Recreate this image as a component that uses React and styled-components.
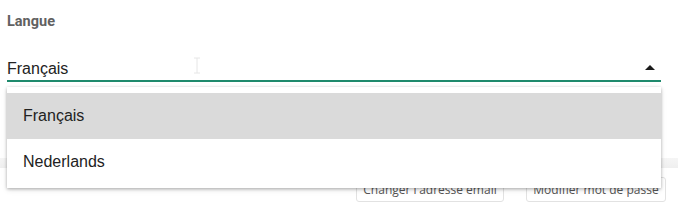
import React, { useState } from "react";
import styled, { createGlobalStyle } from "styled-components";

const GlobalStyle = createGlobalStyle`
  html, body {
    margin: 0;
    padding: 0;
    background: #fff;
  }
  body {
    font-family: "Liberation Sans", Arial, sans-serif;
  }
`;

const Page = styled.div`
  width: 678px;
  height: 209px;
  overflow: hidden;
  display: flex;
  flex-direction: column;
`;

const Field = styled.div`
  display: flex;
  flex-direction: column;
  padding: 0 17px 0 7px;
  position: relative;
  z-index: 2;
`;

const Label = styled.div`
  margin-top: 13px;
  font-family: Roboto, "Liberation Sans", sans-serif;
  font-weight: 700;
  font-size: 14.5px;
  line-height: 17px;
  color: #616161;
`;

const SelectBox = styled.div`
  position: relative;
  margin-top: 29px;
  display: flex;
  align-items: center;
  justify-content: space-between;
  padding-bottom: 2px;
  border-bottom: 2px solid #1f8a6d;
  cursor: pointer;
`;

const Value = styled.span`
  font-size: 16px;
  line-height: 19px;
  color: #222;
`;

const Arrow = styled.span`
  width: 0;
  height: 0;
  margin: 0 6px 3px 0;
  border-left: 5px solid transparent;
  border-right: 5px solid transparent;
  border-bottom: 5px solid #1a1a1a;
`;

const Caret = styled.svg`
  position: absolute;
  left: 186px;
  top: -2px;
`;

const Menu = styled.ul`
  position: absolute;
  top: calc(100% + 7px);
  left: 0;
  right: 0;
  margin: 0;
  padding: 6px 0 3px;
  list-style: none;
  background: #fff;
  box-shadow: 0 1px 3px rgba(0, 0, 0, 0.28), 0 2px 6px rgba(0, 0, 0, 0.1);
`;

const Item = styled.li`
  height: 46px;
  display: flex;
  align-items: center;
  padding-left: 16px;
  font-size: 16px;
  color: #222;
  background: ${(p) => (p.$active ? "#dadada" : "#fff")};
`;

const Band = styled.div`
  margin-top: 76px;
  height: 10px;
  background: linear-gradient(#f5f5f5, #efefef);
`;

const Actions = styled.div`
  display: flex;
  justify-content: flex-end;
  gap: 22px;
  margin-top: 9px;
  padding-right: 12px;
`;

const Button = styled.button`
  height: 25px;
  width: ${(p) => p.$w}px;
  padding: 0;
  background: #fff;
  border: 1px solid #e2e2e2;
  border-radius: 3px;
  font-family: "Open Sans", Lato, sans-serif;
  font-size: 12px;
  color: #555;
`;

const options = ["Français", "Nederlands"];

export default function App() {
  const [lang, setLang] = useState("Français");

  return (
    <Page>
      <GlobalStyle />
      <Field>
        <Label>Langue</Label>
        <SelectBox>
          <Value>{lang}</Value>
          <Arrow />
          <Caret width="8" height="17" viewBox="0 0 8 17">
            <path d="M1 1h6M4 1v15M1 16h6" stroke="#e6e6e6" strokeWidth="1" fill="none" />
          </Caret>
          <Menu>
            {options.map((o) => (
              <Item key={o} $active={o === lang} onClick={() => setLang(o)}>
                {o}
              </Item>
            ))}
          </Menu>
        </SelectBox>
      </Field>
      <Band />
      <Actions>
        <Button $w={148}>Changer l'adresse email</Button>
        <Button $w={140}>Modifier mot de passe</Button>
      </Actions>
    </Page>
  );
}
